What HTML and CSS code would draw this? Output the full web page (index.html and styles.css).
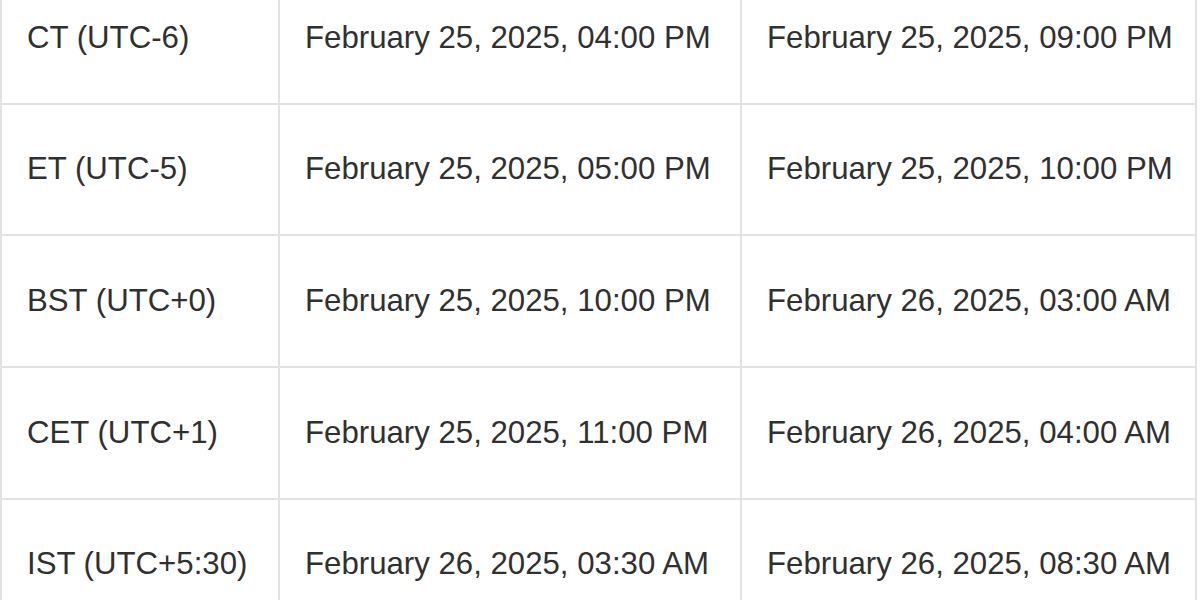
FILE: index.html
```html
<!DOCTYPE html>
<html>
<head>
<meta charset="utf-8">
<link rel="stylesheet" href="styles.css">
</head>
<body>
<div class="viewport">
<div class="table">
  <div class="cell">CT (UTC-6)</div>
  <div class="cell">February 25, 2025, 04:00 PM</div>
  <div class="cell">February 25, 2025, 09:00 PM</div>
  <div class="cell">ET (UTC-5)</div>
  <div class="cell">February 25, 2025, 05:00 PM</div>
  <div class="cell">February 25, 2025, 10:00 PM</div>
  <div class="cell">BST (UTC+0)</div>
  <div class="cell">February 25, 2025, 10:00 PM</div>
  <div class="cell">February 26, 2025, 03:00 AM</div>
  <div class="cell">CET (UTC+1)</div>
  <div class="cell">February 25, 2025, 11:00 PM</div>
  <div class="cell">February 26, 2025, 04:00 AM</div>
  <div class="cell">IST (UTC+5:30)</div>
  <div class="cell">February 26, 2025, 03:30 AM</div>
  <div class="cell">February 26, 2025, 08:30 AM</div>
</div>
</div>
</body>
</html>
```

FILE: styles.css
```css
html, body {
  margin: 0;
  padding: 0;
  background: #ffffff;
}

.viewport {
  width: 1200px;
  height: 600px;
  overflow: hidden;
}

.table {
  display: grid;
  grid-template-columns: 276px 460px 453px;
  grid-auto-rows: 129.67px;
  gap: 2px;
  padding: 2px;
  width: max-content;
  background: #e2e2e2;
  margin-top: -29px;
}

.cell {
  background: #ffffff;
  display: flex;
  align-items: center;
  padding-left: 25px;
  padding-bottom: 0;
  font-family: "Liberation Sans", Arial, sans-serif;
  font-size: 31.2px;
  color: #303030;
  white-space: nowrap;
}
```
